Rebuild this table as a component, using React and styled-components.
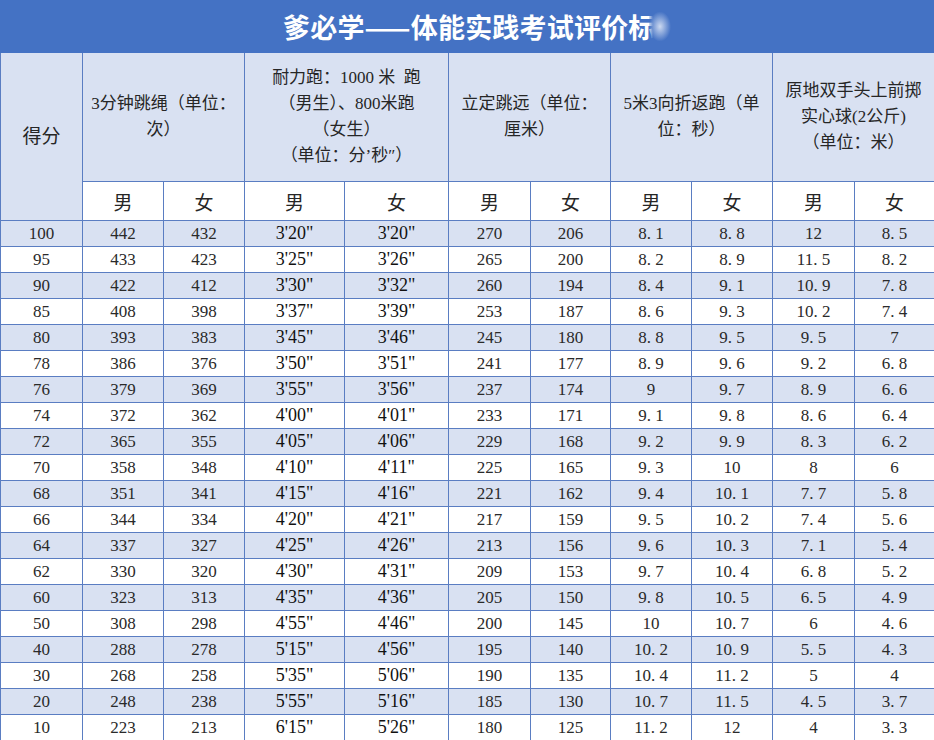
import React from "react";
import styled, { createGlobalStyle } from "styled-components";

const Global = createGlobalStyle`
  html, body { margin: 0; padding: 0; background: #ffffff; }
  body { font-family: "Liberation Serif", "Noto Sans CJK SC", serif; color: #1e1e1e; }
`;

const BLUE = "#4472C4";
const LIGHT = "#D9E1F2";
const LINE = "#5A7DC2";

const Page = styled.div`
  width: 934px;
`;

const TitleBar = styled.div`
  position: relative;
  height: 53px;
  background: ${BLUE};
  display: flex;
  align-items: center;
  padding-left: 283px;
  box-sizing: border-box;
  overflow: hidden;
`;

const Title = styled.h1`
  margin: 0;
  font-family: "Noto Sans CJK SC", sans-serif;
  font-weight: 700;
  font-size: 27px;
  letter-spacing: 0.2px;
  color: #ffffff;
  white-space: nowrap;
  line-height: 1;
`;

const Fade = styled.div`
  position: absolute;
  left: 649px;
  top: 0;
  width: 285px;
  height: 53px;
  background:
    radial-gradient(ellipse 11px 15px at 11px 50%, rgba(228, 235, 248, 0.85) 0, rgba(68, 114, 196, 0) 100%),
    linear-gradient(90deg, rgba(68, 114, 196, 0.2) 0, ${BLUE} 4px);
`;

const Table = styled.table`
  width: 934px;
  table-layout: fixed;
  border-collapse: separate;
  border-spacing: 0;
  border-left: 1px solid ${LINE};
  box-sizing: border-box;
`;

const HeadCell = styled.th`
  height: 129px;
  padding: 0 4px;
  background: ${LIGHT};
  border-right: 1px solid ${LINE};
  border-bottom: 1px solid ${LINE};
  font-family: "Liberation Serif", "Noto Sans CJK SC", serif;
  font-weight: 400;
  font-size: ${(p) => (p.$big ? "19px" : "17px")};
  line-height: 26px;
  text-align: center;
  vertical-align: middle;
  color: #262626;
  box-sizing: border-box;
`;

const SubCell = styled.th`
  height: 39px;
  padding: 0;
  background: #ffffff;
  border-right: 1px solid ${LINE};
  border-bottom: 1px solid ${LINE};
  font-family: "Noto Sans CJK SC", sans-serif;
  font-weight: 400;
  font-size: 19px;
  text-align: center;
  vertical-align: middle;
  color: #262626;
  box-sizing: border-box;
`;

const Row = styled.tr`
  background: ${(p) => (p.$alt ? LIGHT : "#ffffff")};
`;

const Cell = styled.td`
  height: 26px;
  padding: 0;
  border-right: 1px solid ${LINE};
  border-bottom: 1px solid ${LINE};
  font-family: "Liberation Serif", serif;
  font-size: ${(p) => (p.$time ? "18px" : "17px")};
  line-height: 25px;
  text-align: center;
  vertical-align: middle;
  color: ${(p) => (p.$time ? "#111" : "#2a2a2a")};
  box-sizing: border-box;
  white-space: nowrap;
`;

const Dot = styled.span`
  display: inline-block;
  width: 0.5em;
  text-align: left;
`;

const widths = [82, 81, 81, 100, 104, 82, 80, 81, 81, 82, 80];

const rows = [
  ["100", "442", "432", "3'20\"", "3'20\"", "270", "206", "8.1", "8.8", "12", "8.5"],
  ["95", "433", "423", "3'25\"", "3'26\"", "265", "200", "8.2", "8.9", "11.5", "8.2"],
  ["90", "422", "412", "3'30\"", "3'32\"", "260", "194", "8.4", "9.1", "10.9", "7.8"],
  ["85", "408", "398", "3'37\"", "3'39\"", "253", "187", "8.6", "9.3", "10.2", "7.4"],
  ["80", "393", "383", "3'45\"", "3'46\"", "245", "180", "8.8", "9.5", "9.5", "7"],
  ["78", "386", "376", "3'50\"", "3'51\"", "241", "177", "8.9", "9.6", "9.2", "6.8"],
  ["76", "379", "369", "3'55\"", "3'56\"", "237", "174", "9", "9.7", "8.9", "6.6"],
  ["74", "372", "362", "4'00\"", "4'01\"", "233", "171", "9.1", "9.8", "8.6", "6.4"],
  ["72", "365", "355", "4'05\"", "4'06\"", "229", "168", "9.2", "9.9", "8.3", "6.2"],
  ["70", "358", "348", "4'10\"", "4'11\"", "225", "165", "9.3", "10", "8", "6"],
  ["68", "351", "341", "4'15\"", "4'16\"", "221", "162", "9.4", "10.1", "7.7", "5.8"],
  ["66", "344", "334", "4'20\"", "4'21\"", "217", "159", "9.5", "10.2", "7.4", "5.6"],
  ["64", "337", "327", "4'25\"", "4'26\"", "213", "156", "9.6", "10.3", "7.1", "5.4"],
  ["62", "330", "320", "4'30\"", "4'31\"", "209", "153", "9.7", "10.4", "6.8", "5.2"],
  ["60", "323", "313", "4'35\"", "4'36\"", "205", "150", "9.8", "10.5", "6.5", "4.9"],
  ["50", "308", "298", "4'55\"", "4'46\"", "200", "145", "10", "10.7", "6", "4.6"],
  ["40", "288", "278", "5'15\"", "4'56\"", "195", "140", "10.2", "10.9", "5.5", "4.3"],
  ["30", "268", "258", "5'35\"", "5'06\"", "190", "135", "10.4", "11.2", "5", "4"],
  ["20", "248", "238", "5'55\"", "5'16\"", "185", "130", "10.7", "11.5", "4.5", "3.7"],
  ["10", "223", "213", "6'15\"", "5'26\"", "180", "125", "11.2", "12", "4", "3.3"],
];

function Value({ text }) {
  if (!text.includes(".")) return text;
  const [a, b] = text.split(".");
  return (
    <>
      {a}
      <Dot>.</Dot>
      {b}
    </>
  );
}

const groups = [
  <>3分钟跳绳（单位：<br />次）</>,
  <>耐力跑：1000 米&nbsp;&nbsp;跑<br />（男生）、800米跑<br />（女生）<br />（单位：分’秒″）</>,
  <>立定跳远（单位：<br />厘米）</>,
  <>5米3向折返跑（单<br />位：秒）</>,
  <>原地双手头上前掷<br />实心球(2公斤)<br />（单位：米）</>,
];

export default function App() {
  return (
    <Page>
      <Global />
      <TitleBar>
        <Title>爹必学——体能实践考试评价标</Title>
        <Fade />
      </TitleBar>
      <Table>
        <colgroup>
          {widths.map((w, i) => (
            <col key={i} style={{ width: `${w}px` }} />
          ))}
        </colgroup>
        <thead>
          <tr>
            <HeadCell rowSpan={2} $big>
              得分
            </HeadCell>
            {groups.map((g, i) => (
              <HeadCell key={i} colSpan={2}>
                {g}
              </HeadCell>
            ))}
          </tr>
          <tr>
            {groups.map((_, i) => (
              <React.Fragment key={i}>
                <SubCell>男</SubCell>
                <SubCell>女</SubCell>
              </React.Fragment>
            ))}
          </tr>
        </thead>
        <tbody>
          {rows.map((r, ri) => (
            <Row key={ri} $alt={ri % 2 === 0}>
              {r.map((v, ci) => (
                <Cell key={ci} $time={ci === 3 || ci === 4}>
                  <Value text={v} />
                </Cell>
              ))}
            </Row>
          ))}
        </tbody>
      </Table>
    </Page>
  );
}
